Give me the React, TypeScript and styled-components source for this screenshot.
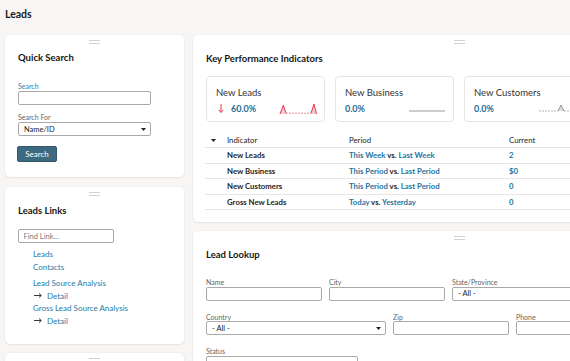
import React from 'react';
import styled, { createGlobalStyle } from 'styled-components';

const Global = createGlobalStyle`
  html, body { margin: 0; padding: 0; background: #f7f6f4; }
  body {
    font-family: Lato, "Open Sans", "Liberation Sans", sans-serif;
    color: #1f1f1f;
    width: 570px;
    height: 361px;
    overflow: hidden;
  }
  * { box-sizing: border-box; }
`;

const Page = styled.div`
  width: 570px;
  height: 361px;
  overflow: hidden;
  padding-left: 5px;
`;

const PageTitle = styled.h1`
  margin: 0;
  height: 35px;
  padding-top: 7px;
  font-size: 10.5px;
  line-height: 14px;
  font-weight: 700;
  color: #1a1a1a;
`;

const Columns = styled.div`
  display: grid;
  grid-template-columns: 179px 533px;
  column-gap: 9px;
  width: 721px;
  align-items: start;
`;

const Column = styled.div<{ $gap: number }>`
  display: flex;
  flex-direction: column;
  gap: ${p => p.$gap}px;
`;

const Card = styled.section<{ $h: number }>`
  background: #fff;
  border-radius: 5px;
  box-shadow: 0 0 0 1px rgba(0, 0, 0, 0.025), 0 1px 2px rgba(0, 0, 0, 0.05);
  height: ${p => p.$h}px;
  padding: 0 13px;
  overflow: hidden;
`;

const Handle = styled.div`
  width: 11px;
  height: 4px;
  margin: 5px auto 0;
  border-top: 1px solid #d2d2d2;
  border-bottom: 1px solid #d2d2d2;
`;

const CardTitle = styled.h2<{ $mt: number }>`
  margin: ${p => p.$mt}px 0 0;
  font-size: 9.5px;
  line-height: 12px;
  font-weight: 700;
  color: #161616;
`;

const Label = styled.div<{ $teal?: boolean; $mt: number }>`
  margin-top: ${p => p.$mt}px;
  margin-bottom: 0.5px;
  font-size: 7px;
  line-height: 10px;
  color: ${p => (p.$teal ? '#2f7fa8' : '#666')};
`;

const TextBox = styled.input<{ $w: number }>`
  display: block;
  width: ${p => p.$w}px;
  height: 14px;
  margin: 0;
  padding: 0 5px;
  border: 1px solid #a9a9a9;
  border-radius: 2px;
  background: #fff;
  font-family: Lato, "Open Sans", sans-serif;
  font-size: 7.5px;
  color: #333;
  outline: none;
  &::placeholder { color: #7d7d7d; }
`;

const SelectBox = styled.div<{ $w: number }>`
  display: flex;
  align-items: center;
  justify-content: space-between;
  width: ${p => p.$w}px;
  height: 14px;
  padding: 0 4px 0 5px;
  border: 1px solid #a9a9a9;
  border-radius: 2px;
  background: #fff;
  font-size: 7.5px;
  color: #222;
`;

const Caret = () => (
  <svg width="5" height="3" viewBox="0 0 5 3"><path d="M0 0H5L2.5 3Z" fill="#222" /></svg>
);

const Button = styled.button`
  display: block;
  margin: 10px 0 0 -1px;
  width: 40px;
  height: 16px;
  padding: 0;
  border: 1px solid #34596b;
  border-radius: 2px;
  background: #3d6a80;
  color: #fff;
  font-family: Lato, "Open Sans", sans-serif;
  font-size: 8px;
`;

const FindBox = styled.div`
  margin: 12.5px 0 0 -0.5px;
`;

const LinkList = styled.div`
  margin: 5px 0 0 15px;
  display: flex;
  flex-direction: column;
`;

const LinkItem = styled.a<{ $mt?: number }>`
  display: flex;
  align-items: center;
  gap: 5px;
  margin-top: ${p => p.$mt ?? 0}px;
  font-size: 8px;
  line-height: 12.5px;
  color: #2b7ba4;
  text-decoration: none;
`;

const Arrow = () => (
  <svg width="8" height="5" viewBox="0 0 8 5" style={{ marginLeft: 1 }}>
    <path d="M0 2.5H7M5 0.5L7.3 2.5L5 4.5" stroke="#222" strokeWidth="0.9" fill="none" />
  </svg>
);

const Tiles = styled.div`
  display: flex;
  gap: 10px;
  margin-top: 11px;
`;

const Tile = styled.div`
  flex: 0 0 119px;
  height: 46px;
  border: 1px solid #e4e4e4;
  border-radius: 4px;
  padding: 10.5px 7px 0 9px;
`;

const TileName = styled.div`
  font-size: 9.5px;
  line-height: 12px;
  color: #333;
`;

const TileRow = styled.div`
  display: flex;
  align-items: center;
  margin-top: 3.5px;
  height: 12px;
`;

const TileValue = styled.span`
  font-size: 9px;
  font-weight: 700;
  color: #1f6d96;
`;

const Spark = styled.svg`
  margin-left: auto;
  display: block;
`;

const DownArrow = () => (
  <svg width="6" height="9" viewBox="0 0 6 9" style={{ margin: '0 7px 0 2px' }}>
    <path d="M3 0V8.3M0.7 5.8L3 8.5L5.3 5.8" stroke="#d8404a" strokeWidth="1" fill="none" />
  </svg>
);

const Table = styled.div`
  margin: 11.5px 0 0 -1px;
`;

const Row = styled.div<{ $head?: boolean }>`
  display: grid;
  grid-template-columns: 22px 122px 160px 1fr;
  align-items: center;
  height: ${p => (p.$head ? 15 : 15.5)}px;
  border-bottom: 1px solid #e6e6e6;
  font-size: 7.8px;
  font-weight: ${p => (p.$head ? 400 : 700)};
  color: #1e1e1e;
`;

const CaretCell = styled.span`
  padding-left: 6px;
  display: flex;
`;

const TealText = styled.span`
  color: #2574a0;
`;

const Fields = styled.div<{ $mt: number }>`
  display: flex;
  gap: 7px;
  margin-top: ${p => p.$mt}px;
`;

const LabelPlain = styled.div`
  font-size: 7px;
  line-height: 10px;
  margin-bottom: -0.5px;
  color: #666;
`;

const Field: React.FC<{ label: string; w: number; select?: string }> = ({ label, w, select }) => (
  <div>
    <LabelPlain>{label}</LabelPlain>
    {select !== undefined ? (
      <SelectBox $w={w}>
        <span>{select}</span>
        <Caret />
      </SelectBox>
    ) : (
      <TextBox $w={w} readOnly />
    )}
  </div>
);

const kpiRows = [
  { name: 'New Leads', a: 'This Week', b: 'Last Week', cur: '2' },
  { name: 'New Business', a: 'This Period', b: 'Last Period', cur: '$0' },
  { name: 'New Customers', a: 'This Period', b: 'Last Period', cur: '0' },
  { name: 'Gross New Leads', a: 'Today', b: 'Yesterday', cur: '0' },
];

export default function App() {
  return (
    <Page>
      <Global />
      <PageTitle>Leads</PageTitle>
      <Columns>
        <Column $gap={9.5}>
          <Card $h={142}>
            <Handle />
            <CardTitle $mt={7.5}>Quick Search</CardTitle>
            <Label $teal $mt={17}>Search</Label>
            <TextBox $w={133} readOnly />
            <Label $mt={6.5}>Search For</Label>
            <SelectBox $w={133}>
              <span>Name/ID</span>
              <Caret />
            </SelectBox>
            <Button>Search</Button>
          </Card>
          <Card $h={157}>
            <Handle />
            <CardTitle $mt={9}>Leads Links</CardTitle>
            <FindBox>
              <TextBox $w={96} placeholder="Find Link..." readOnly />
            </FindBox>
            <LinkList>
              <LinkItem>Leads</LinkItem>
              <LinkItem>Contacts</LinkItem>
              <LinkItem $mt={4}>Lead Source Analysis</LinkItem>
              <LinkItem><Arrow />Detail</LinkItem>
              <LinkItem>Gross Lead Source Analysis</LinkItem>
              <LinkItem><Arrow />Detail</LinkItem>
            </LinkList>
          </Card>
          <Card $h={40}>
            <Handle />
          </Card>
        </Column>
        <Column $gap={9}>
          <Card $h={187}>
            <Handle />
            <CardTitle $mt={8.5}>Key Performance Indicators</CardTitle>
            <Tiles>
              <Tile>
                <TileName>New Leads</TileName>
                <TileRow>
                  <DownArrow />
                  <TileValue>60.0%</TileValue>
                  <Spark width="38" height="12" viewBox="0 0 38 12">
                    <path d="M1 11L4.3 2.3L7 10.5V11ZM32 11L35 1L37.5 11Z" fill="#f6c9d0" />
                    <path d="M7 10.2H32" stroke="#e8596c" strokeWidth="0.7" strokeDasharray="2 1" />
                    <path d="M1 11L4.3 2.3L7 10.2M32 10.2L35 1L37.5 11" stroke="#e2374f" strokeWidth="1" fill="none" />
                  </Spark>
                </TileRow>
              </Tile>
              <Tile>
                <TileName>New Business</TileName>
                <TileRow>
                  <TileValue>0.0%</TileValue>
                  <Spark width="38" height="12" viewBox="0 0 38 12">
                    <path d="M1 8H37" stroke="#cdcdcd" strokeWidth="2" />
                  </Spark>
                </TileRow>
              </Tile>
              <Tile>
                <TileName>New Customers</TileName>
                <TileRow>
                  <TileValue>0.0%</TileValue>
                  <Spark width="38" height="12" viewBox="0 0 38 12">
                    <path d="M21 8L24 2L27 8Z" fill="#dedede" />
                    <path d="M2 8H21M27 8H38" stroke="#9a9a9a" strokeWidth="0.7" strokeDasharray="2 1" />
                    <path d="M21 8L24 2L27 8" stroke="#8a8a8a" strokeWidth="0.9" fill="none" />
                  </Spark>
                </TileRow>
              </Tile>
            </Tiles>
            <Table>
              <Row $head>
                <CaretCell><Caret /></CaretCell>
                <span>Indicator</span>
                <span>Period</span>
                <span>Current</span>
              </Row>
              {kpiRows.map(r => (
                <Row key={r.name}>
                  <span />
                  <span>{r.name}</span>
                  <span>
                    <TealText>{r.a}</TealText> vs. <TealText>{r.b}</TealText>
                  </span>
                  <TealText>{r.cur}</TealText>
                </Row>
              ))}
            </Table>
          </Card>
          <Card $h={200}>
            <Handle />
            <CardTitle $mt={9}>Lead Lookup</CardTitle>
            <Fields $mt={16}>
              <Field label="Name" w={116} />
              <Field label="City" w={116} />
              <Field label="State/Province" w={140} select="- All -" />
            </Fields>
            <Fields $mt={11}>
              <Field label="Country" w={180} select="- All -" />
              <Field label="Zip" w={116} />
              <Field label="Phone" w={140} />
            </Fields>
            <Fields $mt={11}>
              <Field label="Status" w={152} />
            </Fields>
          </Card>
        </Column>
      </Columns>
    </Page>
  );
}
